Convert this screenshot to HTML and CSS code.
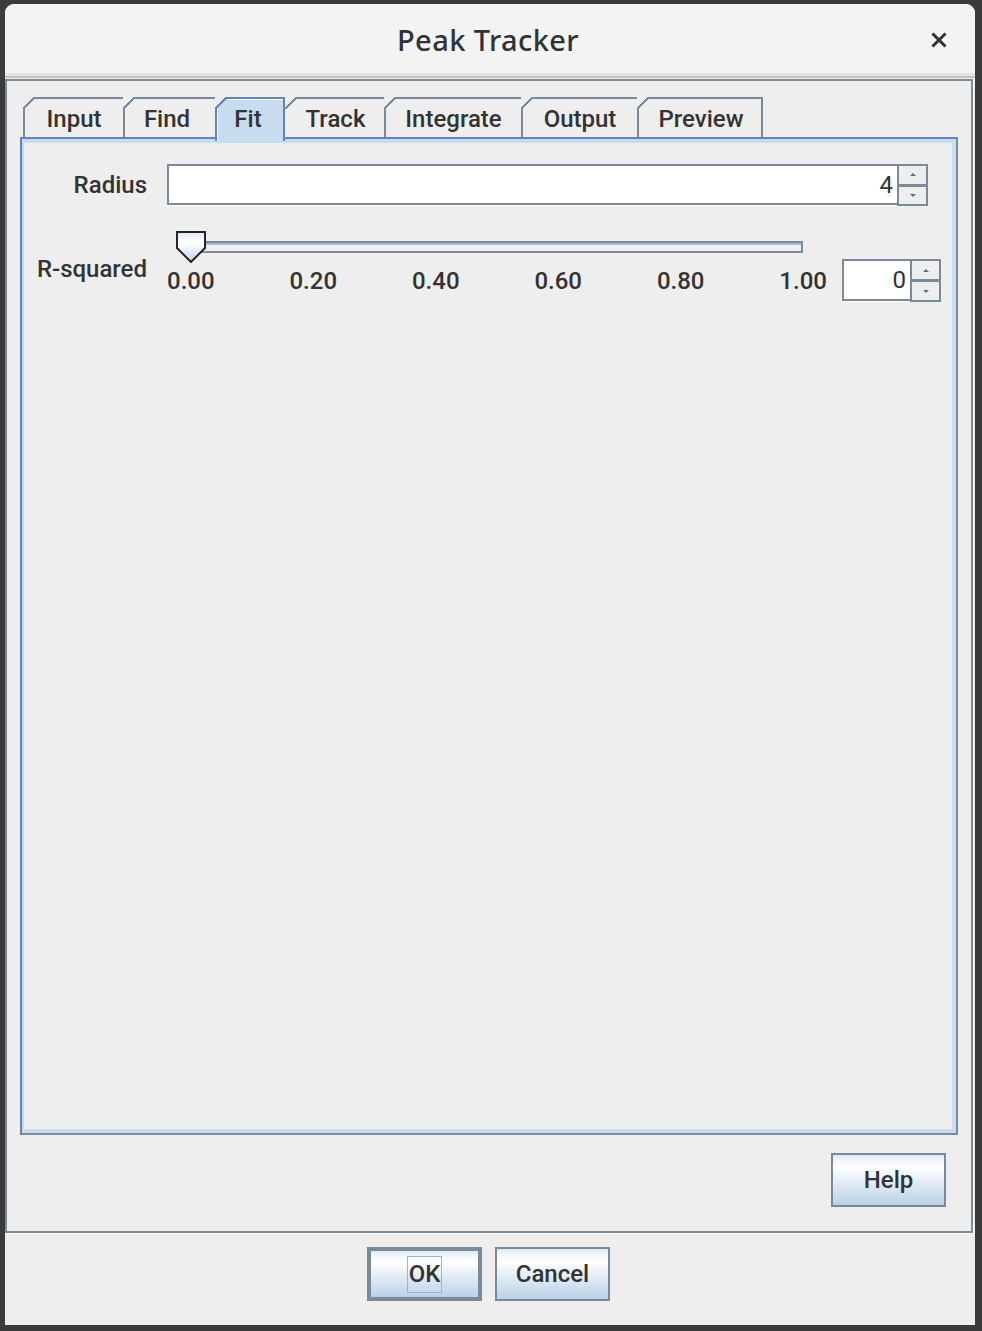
FILE: index.html
```html
<!DOCTYPE html>
<html>
<head>
<meta charset="utf-8">
<title>Peak Tracker</title>
<link rel="stylesheet" href="styles.css">
</head>
<body>
<div class="window">
  <div class="titlebar">
    <span class="title">Peak Tracker</span>
    <svg class="close" viewBox="0 0 16 16" width="16" height="16"><path d="M2.5 2.5 L13.5 13.5 M13.5 2.5 L2.5 13.5" stroke="#2e3436" stroke-width="3" stroke-linecap="square" fill="none"/></svg>
  </div>
  <div class="titlebar-edge"></div>
  <div class="main">
    <div class="tabs">
      <div class="tab tab-input">Input</div>
      <div class="tab tab-find">Find</div>
      <div class="tab tab-fit selected">Fit</div>
      <div class="tab tab-track after-sel">Track</div>
      <div class="tab tab-integrate">Integrate</div>
      <div class="tab tab-output">Output</div>
      <div class="tab tab-preview last">Preview</div>
    </div>
    <div class="tabpanel">
      <div class="row row-radius">
        <div class="lbl">Radius</div>
        <div class="spinner spinner-wide">
          <div class="field">4</div>
          <div class="spin-btns">
            <div class="spin-btn up"><i class="arr-up"></i></div>
            <div class="spin-btn down"><i class="arr-down"></i></div>
          </div>
        </div>
      </div>
      <div class="row row-rsq">
        <div class="lbl lbl-rsq">R-squared</div>
        <div class="slider">
          <div class="track-wrap">
            <div class="track"></div>
            <svg class="thumb" viewBox="0 0 30 32" width="30" height="32">
              <defs>
                <linearGradient id="tg" x1="0" y1="0" x2="0" y2="1">
                  <stop offset="0" stop-color="#dbe7f3"/>
                  <stop offset="0.3" stop-color="#ffffff"/>
                  <stop offset="0.5" stop-color="#f4f8fc"/>
                  <stop offset="1" stop-color="#b8d0ea"/>
                </linearGradient>
              </defs>
              <polygon points="1,1 29,1 29,17 15,31 1,17" fill="url(#tg)" stroke="#262626" stroke-width="2" stroke-linejoin="miter"/>
            </svg>
          </div>
          <div class="ticks">
            <span>0.00</span><span>0.20</span><span>0.40</span><span>0.60</span><span>0.80</span><span>1.00</span>
          </div>
        </div>
        <div class="spinner spinner-small">
          <div class="field">0</div>
          <div class="spin-btns">
            <div class="spin-btn up"><i class="arr-up"></i></div>
            <div class="spin-btn down"><i class="arr-down"></i></div>
          </div>
        </div>
      </div>
    </div>
    <div class="help-row">
      <button class="btn">Help</button>
    </div>
  </div>
  <div class="buttonbar">
    <button class="btn btn-default"><span class="focus">OK</span></button>
    <button class="btn">Cancel</button>
  </div>
</div>
</body>
</html>
```

FILE: styles.css
```css
html, body {
  margin: 0;
  padding: 0;
}

body {
  background: #3b3b3b;
  width: 982px;
  height: 1331px;
  overflow: hidden;
  font-family: Roboto, "Noto Sans", sans-serif;
}

.window {
  margin: 4px 0 0 5px;
  width: 970px;
  height: 1321px;
  background: #eeeeee;
  border-radius: 9px 9px 0 0;
  overflow: hidden;
  display: flex;
  flex-direction: column;
}

/* ---------- title bar ---------- */
.titlebar {
  height: 69px;
  flex: none;
  background: #f3f3f3;
  display: grid;
  grid-template-columns: 1fr auto 1fr;
  align-items: center;
}

.title {
  grid-column: 2;
  font-family: "Noto Sans", sans-serif;
  font-size: 29px;
  font-weight: 500;
  letter-spacing: 0.4px;
  color: #2e3436;
  margin-right: 4px;
  margin-top: 2px;
}

.close {
  grid-column: 3;
  justify-self: end;
  margin-right: 28px;
  margin-top: 2px;
}

.titlebar-edge {
  height: 5px;
  flex: none;
  background: linear-gradient(#e2e2e2 0 3px, #c3c3c3 3px 5px);
}

/* ---------- main etched panel ---------- */
.main {
  margin: 1px 2px 0 0;
  height: 1154px;
  flex: none;
  box-sizing: border-box;
  border: 2px solid #7a8a99;
  box-shadow: 1px 1px 0 #ffffff;
  padding: 16px 13px 0 13px;
  display: flex;
  flex-direction: column;
}

/* ---------- tabs ---------- */
.tabs {
  display: flex;
  align-items: flex-start;
  height: 40px;
  margin-left: 3px;
}

.tab {
  --ln: #7a8a99;
  height: 40px;
  box-sizing: border-box;
  text-align: center;
  line-height: 44px;
  font-size: 24px;
  font-weight: 500;
  color: #333333;
  padding-left: 2px;
  background:
    linear-gradient(to bottom right, transparent calc(50% - 1px), var(--ln) calc(50% - 1px), var(--ln) calc(50% + 1px), transparent calc(50% + 1px)) 0 0 / 12px 12px no-repeat,
    linear-gradient(var(--ln), var(--ln)) 11px 0 / 100% 2px no-repeat,
    linear-gradient(var(--ln), var(--ln)) 0 11px / 2px 100% no-repeat;
}

.tab.after-sel {
  background:
    linear-gradient(to bottom right, transparent calc(50% - 1px), var(--ln) calc(50% - 1px), var(--ln) calc(50% + 1px), transparent calc(50% + 1px)) 0 0 / 12px 12px no-repeat,
    linear-gradient(var(--ln), var(--ln)) 11px 0 / 100% 2px no-repeat;
}

.tab.last {
  background:
    linear-gradient(to bottom right, transparent calc(50% - 1px), var(--ln) calc(50% - 1px), var(--ln) calc(50% + 1px), transparent calc(50% + 1px)) 0 0 / 12px 12px no-repeat,
    linear-gradient(var(--ln), var(--ln)) 11px 0 / 100% 2px no-repeat,
    linear-gradient(var(--ln), var(--ln)) 0 11px / 2px 100% no-repeat,
    linear-gradient(var(--ln), var(--ln)) 100% 0 / 2px 100% no-repeat;
}

.tab.selected {
  --ln: #6382be;
  --fill: #c8dcf0;
  height: 44px;
  z-index: 1;
  background:
    linear-gradient(#ffffff, #ffffff) 12px 2px / calc(100% - 14px) 1px no-repeat,
    linear-gradient(#ffffff, #ffffff) 2px 12px / 1px calc(100% - 12px) no-repeat,
    linear-gradient(to bottom right, transparent calc(50% - 1px), var(--ln) calc(50% - 1px), var(--ln) calc(50% + 1px), var(--fill) calc(50% + 1px)) 0 0 / 12px 12px no-repeat,
    linear-gradient(var(--ln), var(--ln)) 11px 0 / 100% 2px no-repeat,
    linear-gradient(var(--ln), var(--ln)) 0 11px / 2px 100% no-repeat,
    linear-gradient(var(--ln), var(--ln)) 100% 0 / 2px 100% no-repeat,
    linear-gradient(var(--fill), var(--fill)) 12px 0 / 100% 12px no-repeat,
    linear-gradient(var(--fill), var(--fill)) 0 12px / 100% 100% no-repeat;
}

.tab-input { width: 100px; }
.tab-find { width: 92px; padding-left: 0; padding-right: 4px; }
.tab-fit { width: 70px; padding-left: 0; padding-right: 4px; }
.tab-track { width: 99px; }
.tab-integrate { width: 137px; }
.tab-output { width: 116px; }
.tab-preview { width: 126px; }

/* ---------- tab panel ---------- */
.tabpanel {
  height: 998px;
  flex: none;
  box-sizing: border-box;
  border-top: 2px solid #6382be;
  border-left: 2px solid #6382be;
  border-right: 2px solid #7a8a99;
  border-bottom: 2px solid #7a8a99;
  box-shadow:
    inset 0 4px 0 #c8dcf0,
    inset 2px 0 0 #c8dcf0,
    inset -4px 0 0 #c8dcf0,
    inset 0 -4px 0 #c8dcf0;
  display: flex;
  flex-direction: column;
}

.row {
  display: flex;
}

.row-radius {
  margin-top: 25px;
  align-items: center;
}

.row-rsq {
  margin-top: 25px;
  align-items: flex-start;
}

.lbl {
  width: 125px;
  text-align: right;
  font-size: 24px;
  font-weight: 500;
  line-height: 24px;
  color: #333333;
}

.lbl-rsq {
  margin-top: 26px;
}

/* ---------- spinners ---------- */
.spinner {
  display: flex;
  box-sizing: border-box;
}

.spinner-wide {
  margin-left: 20px;
  width: 761px;
  height: 42px;
}

.spinner-small {
  margin-left: 15px;
  margin-top: 28px;
  width: 99px;
  height: 43px;
}

.field {
  flex: 1;
  box-sizing: border-box;
  background: #ffffff;
  border-top: 2px solid #7a8a99;
  border-left: 2px solid #7a8a99;
  border-bottom: 2px solid #7a8a99;
  box-shadow: 0 1px 0 #ffffff;
  height: calc(100% - 1px);
  text-align: right;
  padding-right: 4px;
  font-size: 24px;
  font-weight: 400;
  color: #333333;
  display: flex;
  align-items: center;
  justify-content: flex-end;
}

.spin-btns {
  width: 31px;
  flex: none;
  box-sizing: border-box;
  border: 2px solid #7a8a99;
  background: #eeeeee;
  display: flex;
  flex-direction: column;
}

.spin-btn {
  flex: 1;
  display: flex;
  align-items: center;
  justify-content: center;
}

.spin-btn.up {
  border-bottom: 3px solid #7a8a99;
}

.arr-up {
  width: 0;
  height: 0;
  border-left: 3px solid transparent;
  border-right: 3px solid transparent;
  border-bottom: 3px solid #5f6f80;
}

.arr-down {
  width: 0;
  height: 0;
  border-left: 3px solid transparent;
  border-right: 3px solid transparent;
  border-top: 3px solid #5f6f80;
}

/* ---------- slider ---------- */
.slider {
  margin-left: 20px;
  width: 660px;
  display: flex;
  flex-direction: column;
}

.track-wrap {
  position: relative;
  height: 32px;
}

.track {
  margin: 10px 24px 0 23px;
  height: 12px;
  box-sizing: border-box;
  border: 2px solid #7a8a99;
  box-shadow: inset 0 2px 0 #a8bcd2;
}

.thumb {
  position: absolute;
  left: 9px;
  top: 0;
}

.ticks {
  margin-top: 6px;
  display: flex;
  justify-content: space-between;
  font-size: 24px;
  font-weight: 500;
  line-height: 24px;
  color: #333333;
}

/* ---------- buttons ---------- */
.btn {
  width: 115px;
  height: 54px;
  box-sizing: border-box;
  border: 2px solid #7a8a99;
  padding: 0;
  margin: 0;
  background: linear-gradient(#dfe8f3 0%, #f6f9fc 14%, #ffffff 26%, #eef3f9 42%, #bbd1e8 100%);
  font-family: Roboto, "Noto Sans", sans-serif;
  font-size: 24px;
  font-weight: 500;
  color: #333333;
  display: flex;
  align-items: center;
  justify-content: center;
}

.btn-default {
  border-width: 4px;
}

.focus {
  width: 35px;
  height: 37px;
  box-sizing: border-box;
  border: 1px solid #9db3c9;
  display: flex;
  align-items: center;
  justify-content: center;
}

.help-row {
  display: flex;
  justify-content: flex-end;
  margin-top: 18px;
  padding-right: 12px;
}

.buttonbar {
  flex: 1;
  display: flex;
  justify-content: center;
  align-items: flex-start;
  gap: 13px;
  padding-top: 14px;
  padding-right: 3px;
}
```
